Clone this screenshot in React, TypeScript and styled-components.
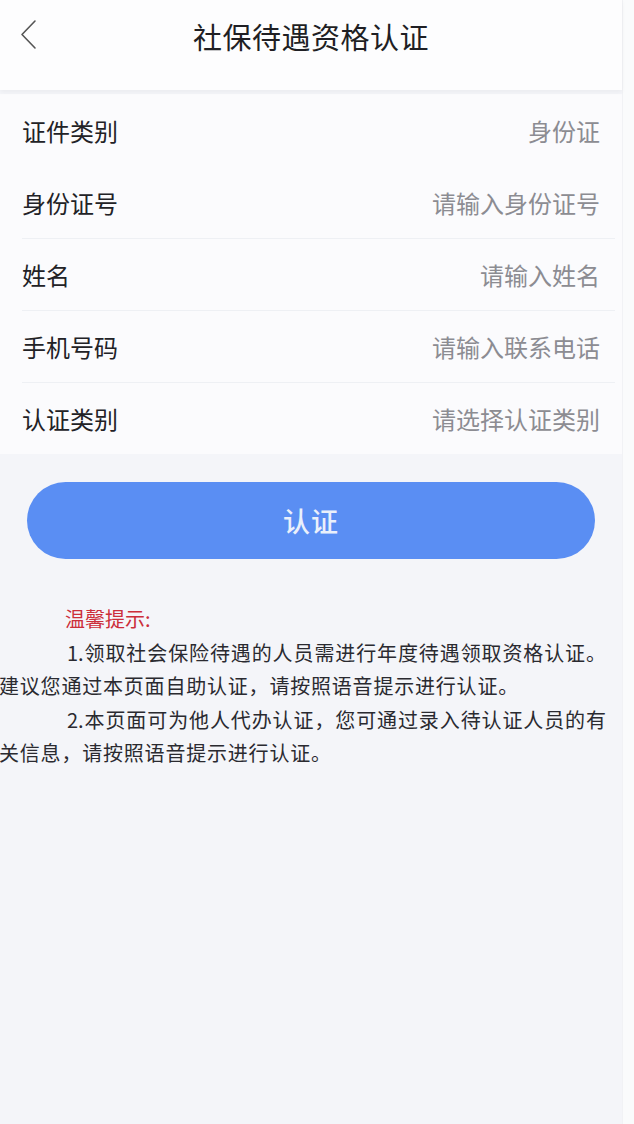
import styled, { createGlobalStyle } from 'styled-components';

const GlobalStyle = createGlobalStyle`
  * {
    box-sizing: border-box;
  }

  html,
  body {
    margin: 0;
    padding: 0;
    background-color: #f4f5f9;
    font-family: 'Noto Sans CJK SC', 'Noto Sans', sans-serif;
  }
`;

const fields = [
  { label: '证件类别', value: '身份证', divider: false },
  { label: '身份证号', value: '请输入身份证号', divider: false },
  { label: '姓名', value: '请输入姓名', divider: true },
  { label: '手机号码', value: '请输入联系电话', divider: true },
  { label: '认证类别', value: '请选择认证类别', divider: true },
];

const notes = [
  { text: '1.领取社会保险待遇的人员需进行年度待遇领取资格认证。', indent: true, fill: true },
  { text: '建议您通过本页面自助认证，请按照语音提示进行认证。', indent: false, fill: false },
  { text: '2.本页面可为他人代办认证，您可通过录入待认证人员的有', indent: true, fill: true },
  { text: '关信息，请按照语音提示进行认证。', indent: false, fill: false },
];

function App() {
  return (
    <>
      <GlobalStyle />
      <Page>
        <Content>
          <Header>
            <BackButton aria-label="返回">
              <svg width="18" height="32" viewBox="0 0 18 32" fill="none">
                <path d="M15 2 L2 15.5 L15 29" stroke="#555" strokeWidth="1.6" strokeLinecap="round" strokeLinejoin="round" />
              </svg>
            </BackButton>
            <Title>社保待遇资格认证</Title>
          </Header>

          <Form>
            {fields.map((field) => (
              <Row key={field.label} $divider={field.divider}>
                <Label>{field.label}</Label>
                <Value>{field.value}</Value>
              </Row>
            ))}
          </Form>

          <SubmitButton>认证</SubmitButton>

          <Notice>
            <NoticeTitle>温馨提示:</NoticeTitle>
            {notes.map((note) => (
              <NoteLine key={note.text} $indent={note.indent} $fill={note.fill}>
                {note.text}
              </NoteLine>
            ))}
          </Notice>
        </Content>
        <ScrollTrack />
      </Page>
    </>
  );
}

const Page = styled.main`
  width: 100%;
  min-height: 1124px;
  display: flex;
  overflow: hidden;
`;

const Content = styled.div`
  flex: 1;
  min-width: 0;
  background-color: #f4f5f9;
  display: flex;
  flex-direction: column;
`;

const ScrollTrack = styled.aside`
  width: 12px;
  flex-shrink: 0;
  background-color: #fafbfc;
  border-left: 1px solid #f1f2f5;
`;

const Header = styled.header`
  position: relative;
  height: 90px;
  padding-bottom: 18px;
  background-color: #fdfdfe;
  box-shadow: 0 2px 5px rgba(0, 0, 0, 0.045);
  display: flex;
  align-items: center;
  justify-content: center;
`;

const BackButton = styled.button`
  position: absolute;
  left: 20px;
  top: 19px;
  padding: 0;
  border: none;
  background: none;
  display: flex;
`;

const Title = styled.h1`
  margin: 0;
  font-size: 29px;
  font-weight: 400;
  color: #1f1f24;
  letter-spacing: 0.5px;
`;

const Form = styled.section`
  margin-top: 4px;
  background-color: #fbfbfd;
  padding: 0 7px 0 22px;
`;

const Row = styled.div<{ $divider: boolean }>`
  height: 72px;
  display: flex;
  align-items: center;
  justify-content: space-between;
  padding-right: 15px;
  border-top: 1px solid ${({ $divider }) => ($divider ? '#eef0f4' : 'transparent')};
`;

const Label = styled.span`
  font-size: 24px;
  color: #222226;
`;

const Value = styled.span`
  font-size: 24px;
  color: #8c8c92;
`;

const SubmitButton = styled.button`
  margin: 28px 27px 0;
  height: 77px;
  border: none;
  border-radius: 39px;
  background-color: #5a8ef3;
  color: #eaf0fb;
  font-family: 'Noto Sans CJK SC', sans-serif;
  font-size: 27px;
  font-weight: 500;
  letter-spacing: 1px;
`;

const Notice = styled.section`
  margin: 43px 16px 0 -1px;
  font-size: 20px;
  line-height: 33.5px;
  color: #2a2a30;
`;

const NoticeTitle = styled.div`
  padding-left: 66px;
  color: #cc2e3a;
`;

const NoteLine = styled.div<{ $indent: boolean; $fill: boolean }>`
  padding-left: ${({ $indent }) => ($indent ? '68px' : '0')};
  white-space: nowrap;
  text-align: justify;
  text-align-last: ${({ $fill }) => ($fill ? 'justify' : 'left')};
  letter-spacing: ${({ $fill }) => ($fill ? '0' : '0.8px')};
`;

export default App;
